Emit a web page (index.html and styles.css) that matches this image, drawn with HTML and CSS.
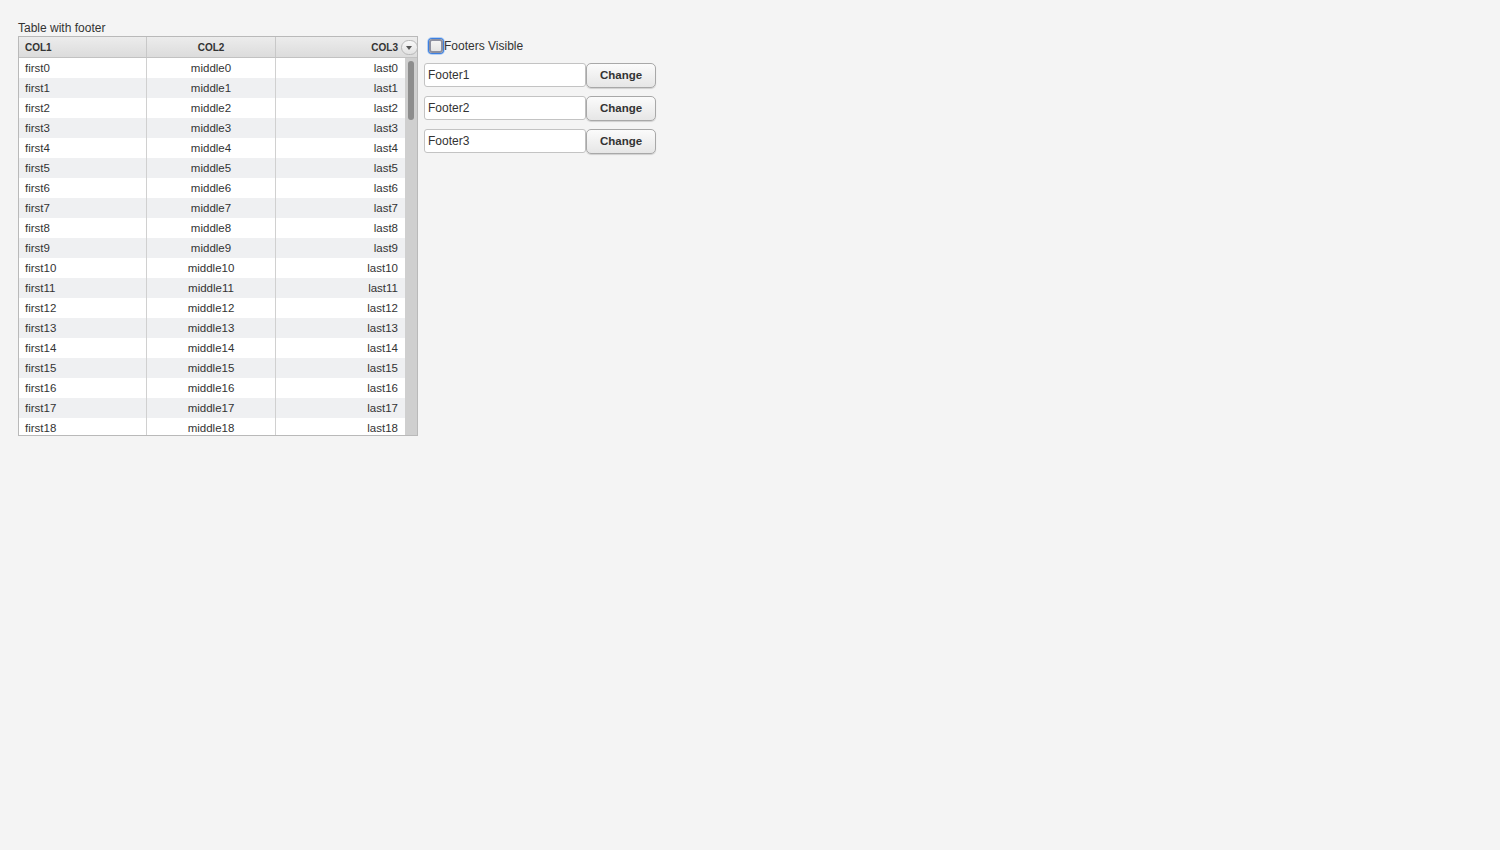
FILE: index.html
```html
<!DOCTYPE html>
<html lang="en">
<head>
    <meta charset="UTF-8">
    <title>Table with footer</title>
    <link rel="stylesheet" href="styles.css">
</head>
<body>
<div class="page">
    <div class="left">
        <div class="caption">Table with footer</div>
        <div class="table">
            <div class="head">
                <div class="hcell c1">COL1</div>
                <div class="hcell c2">COL2</div>
                <div class="hcell c3">COL3</div>
                <div class="menu-btn"><span class="arrow"></span></div>
            </div>
            <div class="body">
                <div class="rows" id="rows"></div>
                <div class="scrollbar"><div class="thumb"></div></div>
            </div>
        </div>
    </div>

    <div class="controls">
        <label class="check">
            <span class="box"></span>
            Footers Visible
        </label>
        <div class="line">
            <input class="field" type="text" value="Footer1">
            <button class="btn">Change</button>
        </div>
        <div class="line">
            <input class="field" type="text" value="Footer2">
            <button class="btn">Change</button>
        </div>
        <div class="line">
            <input class="field" type="text" value="Footer3">
            <button class="btn">Change</button>
        </div>
    </div>
</div>

<script>
// fill the table rows
var rows = document.getElementById('rows');
for (var i = 0; i < 19; i++) {
    var row = document.createElement('div');
    row.className = 'row' + (i % 2 ? ' odd' : '');
    row.innerHTML =
        '<div class="cell c1">first' + i + '</div>' +
        '<div class="cell c2">middle' + i + '</div>' +
        '<div class="cell c3">last' + i + '</div>';
    rows.appendChild(row);
}
</script>
</body>
</html>
```

FILE: styles.css
```css
body {
    margin: 0;
    background-color: #f4f4f4;
    font-family: "Liberation Sans", Arial, sans-serif;
    font-size: 12px;
    color: #333;
}
.page {
    display: flex;
    align-items: flex-start;
    padding: 20px 0 0 18px;
}
.caption {
    height: 16px;
    line-height: 16px;
}
.table {
    width: 398px;
    border: 1px solid #b9b9b9;
    background: #fff;
}
.head {
    display: flex;
    position: relative;
    height: 20px;
    background: linear-gradient(#ececec, #dcdcdc);
    border-bottom: 1px solid #c2c2c2;
}
.hcell {
    font-size: 10px;
    font-weight: bold;
    line-height: 21px;
    color: #333;
    box-sizing: border-box;
    border-right: 1px solid #c8c8c8;
}
.hcell.c1 { width: 128px; padding-left: 6px; }
.hcell.c2 { width: 129px; text-align: center; }
.hcell.c3 { width: 141px; text-align: right; padding-right: 19px; border-right: none; }
.menu-btn {
    position: absolute;
    right: -1px;
    top: 3px;
    width: 15px;
    height: 13px;
    border: 1px solid #b8b8b8;
    border-radius: 8px;
    background: linear-gradient(#f8f8f8, #e2e2e2);
}
.arrow {
    position: absolute;
    left: 4px;
    top: 5px;
    border-left: 3.5px solid transparent;
    border-right: 3.5px solid transparent;
    border-top: 4px solid #555;
}
.body {
    display: flex;
    height: 377px;
    overflow: hidden;
}
.rows {
    width: 386px;
}
.row {
    display: flex;
    height: 20px;
    line-height: 20px;
    background: #fff;
}
.row.odd {
    background: #eff0f2;
}
.cell {
    box-sizing: border-box;
    font-size: 11.5px;
    color: #333;
    border-right: 1px solid #d0d0d0;
}
.cell.c1 { width: 128px; padding-left: 6px; }
.cell.c2 { width: 129px; text-align: center; }
.cell.c3 { width: 129px; text-align: right; padding-right: 7px; border-right: none; }
.scrollbar {
    width: 12px;
    background: #cfcfcf;
    padding: 3px 0 0 3px;
    box-sizing: border-box;
}
.thumb {
    width: 6px;
    height: 59px;
    border-radius: 3px;
    background: #8d8d8d;
}
.controls {
    display: flex;
    flex-direction: column;
    gap: 9px;
    margin-left: 6px;
    padding-top: 17px;
}
.check {
    display: flex;
    align-items: center;
    height: 18px;
    padding-left: 5px;
    color: #333;
}
.box {
    width: 14px;
    height: 14px;
    margin-right: 1px;
    box-sizing: border-box;
    border: 2px solid #8d90a0;
    border-radius: 3px;
    background: linear-gradient(#f4f4f4, #e4e4e4);
    box-shadow: 0 0 0 1px #3c7fe0, 0 0 0 2px #b4d0f4;
}
.line {
    display: flex;
    align-items: flex-start;
    margin-top: -1px;
}
.field {
    width: 162px;
    height: 24px;
    box-sizing: border-box;
    margin: 0;
    padding: 0 3px;
    border: 1px solid #c3c3c3;
    border-radius: 3px;
    background: #fff;
    font-family: "Liberation Sans", Arial, sans-serif;
    font-size: 12px;
    color: #333;
}
.btn {
    width: 70px;
    height: 25px;
    margin: 0;
    padding: 0 0 2px;
    border: 1px solid #a8a8a8;
    border-radius: 5px;
    background: linear-gradient(#fbfbfb, #e6e6e6);
    box-shadow: 0 1px 1px rgba(0,0,0,0.15);
    font-family: "Liberation Sans", Arial, sans-serif;
    font-size: 11.5px;
    font-weight: bold;
    color: #333;
}
```
